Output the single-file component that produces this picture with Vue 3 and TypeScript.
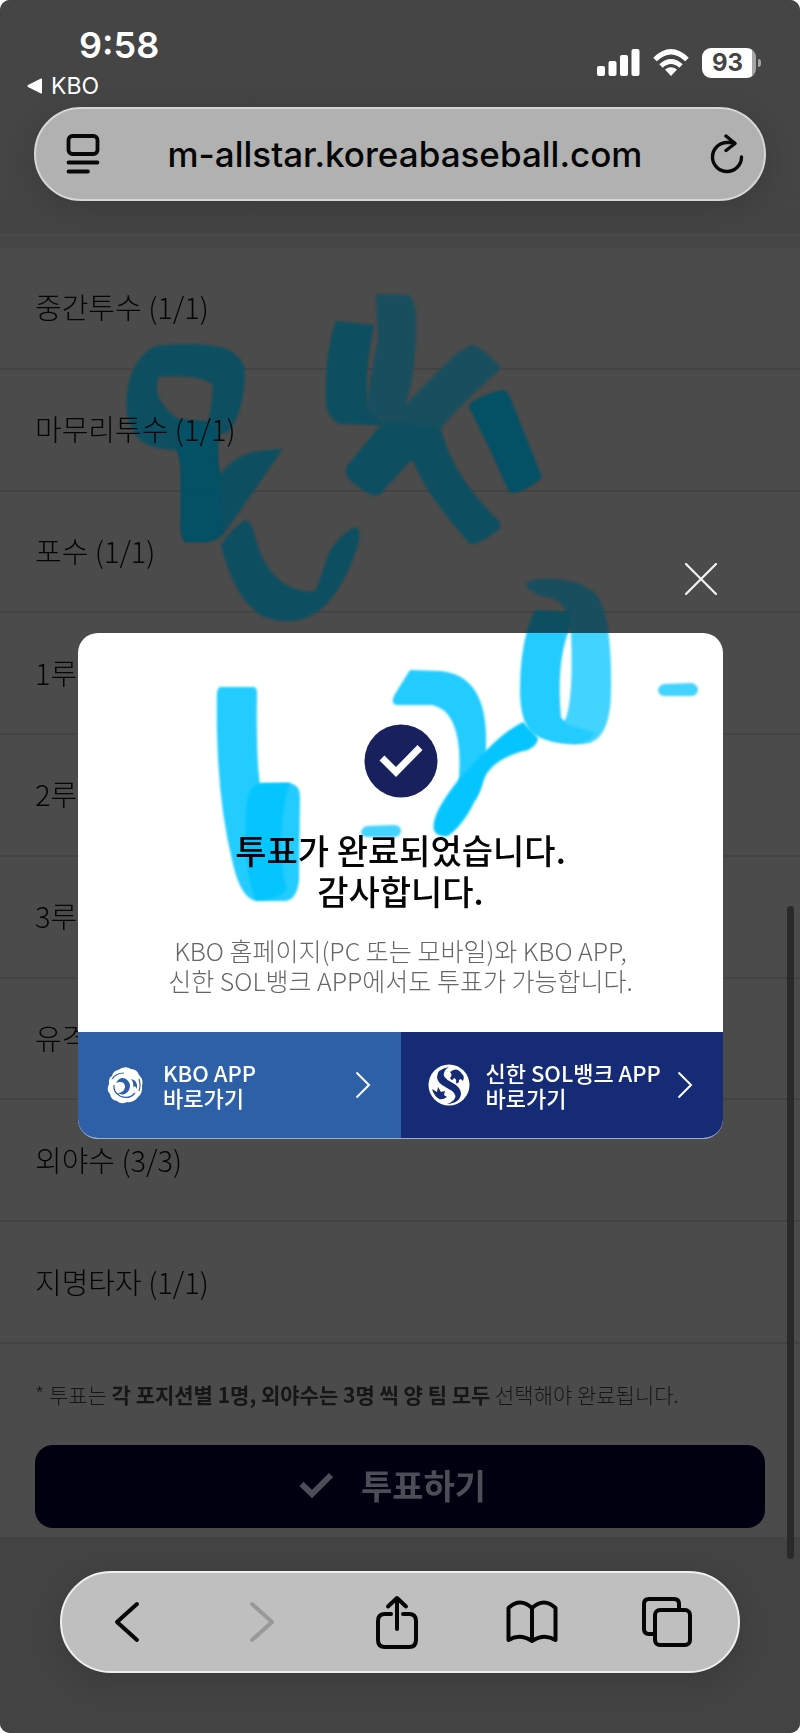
<script setup lang="ts">
interface Position {
  name: string
  picked: number
  total: number
}

const positions: Position[] = [
  { name: '중간투수', picked: 1, total: 1 },
  { name: '마무리투수', picked: 1, total: 1 },
  { name: '포수', picked: 1, total: 1 },
  { name: '1루수', picked: 1, total: 1 },
  { name: '2루수', picked: 1, total: 1 },
  { name: '3루수', picked: 1, total: 1 },
  { name: '유격수', picked: 1, total: 1 },
  { name: '외야수', picked: 3, total: 3 },
  { name: '지명타자', picked: 1, total: 1 },
]

/* Marker strokes; "tone" is the density of the ink. */
const strokes: { d: string; tone: 'thin' | 'mid' | 'full' }[] = [
  { tone: 'mid', d: 'M155 346Q195 341 225 348Q246 358 245 375Q243 415 228 432L219 435Q216 460 220 475C235 455 250 450 283 449L275 460Q255 490 225 532Q220 541 200 542L186 542Q180 538 181 520L181 470Q180 455 177 450Q150 450 138 438Q124 420 127 395Q130 360 155 346ZM158 377Q200 374 213 385Q212 405 208 422L178 419Q155 402 157 385Z' },
  { tone: 'full', d: 'M177 420L208 422L218 436Q216 460 220 475L222 532Q217 542 200 542L186 542Q180 538 181 520L181 470Q180 455 177 450Z' },
  { tone: 'mid', d: 'M245 520Q252 521 256 540Q270 590 312 592L316 590L330 550Q345 530 356 527Q362 532 358 545Q340 600 312 615Q290 627 262 616Q235 600 221 545Q230 530 245 520Z' },
  { tone: 'mid', d: 'M336 321L374 325Q365 370 367 395L368 410L384 425L340 424Q326 418 326 400Q325 350 336 321Z' },
  { tone: 'thin', d: 'M376 294L408 295Q416 300 416 320Q416 380 404 408L386 425L367 408Q368 385 378 340Z' },
  { tone: 'thin', d: 'M472 345Q480 346 500 366Q500 372 495 374Q460 405 442 427L420 450L386 424L405 405L458 352Z' },
  { tone: 'mid', d: 'M383 422L367 408L366 422L383 426L386 422L442 427L380 494Q372 500 350 480Q343 473 347 466Z' },
  { tone: 'mid', d: 'M441 430Q455 480 500 522L500 528Q480 545 470 544Q440 510 425 485L410 456L420 440Z' },
  { tone: 'full', d: 'M502 390Q508 390 512 402L542 477Q528 492 510 493Q503 480 495 460L468 405Q480 395 502 390Z' },
  { tone: 'thin', d: 'M527 588Q524 580 540 579Q585 577 600 600Q612 625 611 690Q611 735 590 743Q560 747 535 732L561 718Q565 728 569 705Q573 680 571 633L566 612Q562 598 540 596Z' },
  { tone: 'mid', d: 'M535 610L570 612L570 628Q556 660 561 718L566 724L596 733Q588 744 575 744Q550 744 535 735Q520 725 520 690Q520 640 535 610Z' },
  { tone: 'mid', d: 'M410 670L440 671Q488 675 486 745Q487 785 475 800L458 790Q466 712 432 705L396 705Q390 703 395 694Z' },
  { tone: 'full', d: 'M523 722C500 733 480 757 460 778Q430 815 434 830Q436 837 448 836Q470 820 483 780C490 765 505 755 528 750Q538 745 538 738Z' },
  { tone: 'mid', d: 'M219 687L254 687Q257 688 257 692Q256 760 260 784L290 783Q300 785 300 797L299 880Q297 900 285 901L256 901Q240 898 232 860Q215 790 217 692Z' },
  { tone: 'full', d: 'M246 815Q246 784 262 783L290 783Q281 810 281 850Q283 880 287 890Q275 901 256 900Q243 870 246 815Z' },
  { tone: 'thin', d: 'M367 826L395 825Q401 826 401 831Q400 837 394 837L366 837Q361 836 361 832Q362 827 367 826Z' },
  { tone: 'thin', d: 'M664 684L692 683Q698 685 698 690Q697 696 691 696L664 696Q658 695 658 690Q659 685 664 684Z' },
]
</script>

<template>
  <div class="screen">
    <header class="top">
      <div class="status">
        <div class="clock">
          <time>9:58</time>
          <a href="#" class="back">
            <svg width="16" height="16" viewBox="0 0 16 16" aria-hidden="true"><path d="M15 1.5v13q0 1.500-1.500.8L1 9Q-.2 8 1 7L13.500.7Q15 0 15 1.500Z" fill="#fff" /></svg>
            KBO
          </a>
        </div>
        <div class="indicators">
          <svg width="43" height="28" viewBox="0 0 43 28" fill="#fff" aria-label="signal">
            <rect x="0" y="17" width="8" height="10" rx="2" />
            <rect x="11.500" y="12" width="8" height="15" rx="2" />
            <rect x="23" y="6" width="8" height="21" rx="2" />
            <rect x="34.500" y="0" width="8" height="27" rx="2" />
          </svg>
          <svg width="36" height="28" viewBox="0 0 36 28" fill="none" stroke="#fff" stroke-width="5" aria-label="wifi">
            <path d="M2 10.500Q18-5 34 10.500" />
            <path d="M8 17Q18 8 28 17" />
            <path d="M12 20.500Q18 16 24 20.500L18 27Z" fill="#fff" stroke="none" />
          </svg>
          <div class="battery"><span>93</span></div>
        </div>
      </div>
      <div class="address">
        <button type="button" aria-label="페이지 메뉴">
          <svg width="34" height="40" viewBox="0 0 34 40" fill="none" stroke="#080808" stroke-width="3.800" stroke-linecap="round">
            <rect x="2.500" y="2" width="29" height="18" rx="4" />
            <path d="M2.500 28.500h29M2.500 37.500H22" />
          </svg>
        </button>
        <a href="#" class="url">m-allstar.koreabaseball.com</a>
        <button type="button" aria-label="새로고침">
          <svg width="34" height="40" viewBox="0 0 34 40" fill="none" stroke="#080808" stroke-width="3.400" stroke-linecap="round" stroke-linejoin="round">
            <path d="M31.500 23A14.500 14.500 0 1 1 17 8.500H24" />
            <path d="M16 2L25 9.500L16 16.500" />
          </svg>
        </button>
      </div>
    </header>

    <main>
      <ul class="positions">
        <li v-for="p in positions" :key="p.name"><span>{{ p.name }} ({{ p.picked }}/{{ p.total }})</span></li>
      </ul>
      <section class="submit">
        <p>* 투표는 <b>각 포지션별 1명, 외야수는 3명 씩 양 팀 모두</b> 선택해야 완료됩니다.</p>
        <button type="button" class="vote">
          <svg width="34" height="26" viewBox="0 0 34 26" fill="none" stroke="#4d4d57" stroke-width="6" aria-hidden="true"><path d="M2.500 12L13 22L32 3" /></svg>
          투표하기
        </button>
      </section>
    </main>

    <div class="toolbar-area">
      <nav class="toolbar">
        <button type="button" aria-label="뒤로">
          <svg width="26" height="42" viewBox="0 0 26 42"><path d="M23 3L3 21L23 39" /></svg>
        </button>
        <button type="button" aria-label="앞으로" disabled>
          <svg width="26" height="42" viewBox="0 0 26 42"><path d="M3 3L23 21L3 39" /></svg>
        </button>
        <button type="button" aria-label="공유">
          <svg width="42" height="54" viewBox="0 0 42 54"><path d="M15 19H9Q2 19 2 26V45Q2 52 9 52H33Q40 52 40 45V26Q40 19 33 19H27M21 34V3M12 11.500L21 3L30 11.500" /></svg>
        </button>
        <button type="button" aria-label="책갈피">
          <svg width="52" height="46" viewBox="0 0 52 46"><path d="M26 9Q14-2 2.500 9V41Q14 34 26 42Q38 34 49.500 41V9Q38-2 26 9V42" /></svg>
        </button>
        <button type="button" aria-label="탭">
          <svg width="50" height="50" viewBox="0 0 50 50"><path d="M37 12V7Q37 2 32 2H7Q2 2 2 7V32Q2 37 7 37H12" /><rect x="13" y="13" width="35" height="35" rx="5" /></svg>
        </button>
      </nav>
    </div>
    <div class="scroll-thumb"></div>

    <div class="overlay">
      <div class="popup">
        <button type="button" class="close" aria-label="닫기">
          <svg width="32" height="32" viewBox="0 0 32 32" stroke="#f4f4f4" stroke-width="2.200" stroke-linecap="round"><path d="M1 1L31 31M31 1L1 31" /></svg>
        </button>
        <section class="dialog" role="dialog" aria-labelledby="done-title">
          <div class="message">
            <svg class="done" width="74" height="74" viewBox="0 0 74 74" aria-hidden="true">
              <circle cx="37" cy="37" r="36.500" fill="#18205e" />
              <path d="M18 34L32 48L56 23.500" fill="none" stroke="#fff" stroke-width="7" />
            </svg>
            <h1 id="done-title">투표가 완료되었습니다.<br>감사합니다.</h1>
            <p>KBO 홈페이지(PC 또는 모바일)와 KBO APP,<br>신한 SOL뱅크 APP에서도 투표가 가능합니다.</p>
          </div>
          <div class="links">
            <a href="#" class="kbo">
              <svg class="logo" width="42" height="42" viewBox="0 0 42 42" aria-hidden="true">
                <path d="M13 6Q20 1 26 5Q32 5 34 11Q39 16 37 22Q38 29 33 33Q29 39 22 38Q16 41 12 37Q6 36 5 30Q1 26 4 20Q3 14 7 12Q8 7 13 6Z" fill="#fff" />
                <path d="M11 19Q15 12 21 15Q27 19 24 26Q20 33 12 29Q19 29 20 23Q20 18 15 18Q13 18 11 19ZM26 15Q33 16 32 25Q30 21 28 23Q29 18 26 15Z" fill="#2e60a8" />
                <path d="M9 21Q8 28 15 32Q24 36 30 29M7 15Q11 9 19 9M34 15Q36 22 34 27" fill="none" stroke="#2e60a8" stroke-width="1.200" />
              </svg>
              <span class="label">KBO APP<br>바로가기</span>
              <svg class="chevron" width="16" height="28" viewBox="0 0 16 28" aria-hidden="true"><path d="M1.500 1.500L14 14L1.500 26.500" /></svg>
            </a>
            <a href="#" class="sol">
              <svg class="logo" width="42" height="42" viewBox="0 0 42 42" aria-hidden="true">
                <circle cx="21" cy="21" r="20.500" fill="#fff" />
                <path d="M21 3Q9 5 9 13Q9 19 19 24Q29 29 27 34Q25 38 19 40Q32 39 33 30Q33 23 23 18Q14 13 16 9Q17 5 21 3Z" fill="#162b75" />
                <path d="M22 8Q29 2 34 10Q37 12 35 17Q33 14 31 16Q31 20 28 19Q29 15 26 14Q24 18 22 14Q25 11 22 8ZM4 25L9 28L10 23L13 28L17 27L16 31L19 33Q15 36 11 35Q6 32 4 25Z" fill="#162b75" />
              </svg>
              <span class="label">신한 SOL뱅크 APP<br>바로가기</span>
              <svg class="chevron" width="16" height="28" viewBox="0 0 16 28" aria-hidden="true"><path d="M1.500 1.500L14 14L1.500 26.500" /></svg>
            </a>
          </div>
        </section>
      </div>
    </div>

    <svg class="ink dim" width="800" height="1733" viewBox="0 0 800 1733" aria-hidden="true">
      <defs>
        <clipPath id="outside"><path d="M0 0H800V633H0Z" /></clipPath>
      </defs>
      <g clip-path="url(#outside)"><path v-for="s in strokes" :key="s.d" :d="s.d" :class="s.tone" fill-rule="evenodd" /></g>
    </svg>
    <svg class="ink bright" width="800" height="1733" viewBox="0 0 800 1733" aria-hidden="true">
      <defs>
        <clipPath id="inside"><path d="M78 633H723V1032H78Z" /></clipPath>
      </defs>
      <g clip-path="url(#inside)"><path v-for="s in strokes" :key="s.d" :d="s.d" :class="s.tone" fill-rule="evenodd" /></g>
    </svg>
  </div>
</template>

<style>
body {
  background: #fff;
}
</style>

<style scoped>
.screen {
  position: relative;
  isolation: isolate;
  display: flex;
  flex-direction: column;
  overflow: hidden;
  border-radius: 10px;
  background: #4b4b4b;
  color: #050505;
  font-family: "Noto Sans CJK KR", sans-serif;
}
* {
  box-sizing: border-box;
}
svg {
  display: block;
  flex: none;
}
button {
  padding: 0;
  border: 0;
  background: none;
  font: inherit;
  color: inherit;
}
a {
  color: inherit;
  text-decoration: none;
}
.top {
  display: flex;
  flex-direction: column;
  padding: 24px 34px 47px;
  background: linear-gradient(#454545, #444 94%, #484848 94%, #484848 95%, #464646 95%);
  font-family: Inter, sans-serif;
}
.status {
  display: flex;
  justify-content: space-between;
  height: 83px;
  margin: 0 4px 0 -7px;
  color: #fff;
}
.clock {
  display: flex;
  flex-direction: column;
}
time {
  padding-left: 52px;
  font-size: 36px;
  font-weight: 600;
  line-height: 42px;
}
.back {
  display: flex;
  align-items: center;
  gap: 8px;
  font-size: 23px;
  line-height: 40px;
  font-weight: 400;
}
.indicators {
  display: flex;
  align-items: center;
  gap: 13px;
  height: 78px;
}
.battery {
  position: relative;
  width: 54px;
  height: 30px;
  border-radius: 9px;
  margin-right: 6px;
  background: linear-gradient(90deg, #fff 50px, #a5a5a5 50px);
  color: #444;
  font-size: 24px;
  font-weight: 700;
  line-height: 30px;
  text-align: center;
}
.battery::after {
  content: "";
  position: absolute;
  top: 11px;
  right: -5px;
  width: 3px;
  height: 8px;
  border-radius: 0 3px 3px 0;
  background: #a5a5a5;
}
.battery span {
  padding-right: 3px;
}
.address {
  display: flex;
  align-items: center;
  justify-content: space-between;
  height: 94px;
  padding: 0 20px 0 30px;
  border: 2px solid #d6d6d6;
  border-radius: 47px;
  background: #b1b1b1;
  box-shadow: 0 8px 30px #0002;
}
.url {
  font-size: 35px;
  font-weight: 500;
  line-height: 44px;
}
.positions {
  display: grid;
  grid-auto-rows: 1fr;
  min-height: 1096px;
  margin: 0;
  padding: 0;
  list-style: none;
}
.positions li {
  display: flex;
  align-items: center;
  padding: 0 35px 3px;
  border-bottom: 2px solid #434343;
  font-size: 29px;
  font-weight: 300;
}
.positions span {
  position: relative;
  z-index: 1;
}
.submit {
  padding: 34px 35px 9px;
}
.submit p {
  margin: 0;
  color: #161616;
  font-size: 21px;
  font-weight: 300;
  line-height: 32px;
  white-space: nowrap;
}
.submit b {
  font-weight: 700;
}
.vote {
  display: flex;
  align-items: center;
  justify-content: center;
  gap: 28px;
  width: 100%;
  height: 83px;
  margin-top: 35px;
  padding: 0 15px 4px 0;
  border-radius: 18px;
  background: #000010;
  color: #4d4d57;
  font-size: 34px;
  font-weight: 700;
}
.toolbar-area {
  padding: 34px 60px 60px;
  background: #434343;
}
.toolbar {
  display: grid;
  grid-template-columns: repeat(5, 135px);
  justify-content: center;
  align-items: center;
  height: 102px;
  padding-right: 7px;
  border: 2px solid #efefef;
  border-radius: 51px;
  background: #bfbfbf;
  box-shadow: 0 8px 30px #0002;
}
.toolbar button {
  display: flex;
  justify-content: center;
}
.toolbar svg {
  fill: none;
  stroke: #050505;
  stroke-width: 4;
  stroke-linecap: round;
  stroke-linejoin: round;
}
.toolbar button:disabled svg {
  stroke: #999;
}
.scroll-thumb {
  position: absolute;
  top: 906px;
  right: 6px;
  width: 7px;
  height: 653px;
  border-radius: 4px;
  background: #292929;
}
.overlay {
  position: absolute;
  z-index: 2;
  inset: 0;
  display: flex;
  flex-direction: column;
  align-items: center;
  padding: 563px 77px 0 78px;
}
.popup {
  display: flex;
  flex-direction: column;
  width: 100%;
  max-width: 645px;
}
.close {
  align-self: flex-end;
  margin: 0 6px 38px 0;
}
.dialog {
  overflow: hidden;
  border-radius: 20px;
  border-bottom: 1px solid #9cb0d4;
  background: #fff;
}
.message {
  display: flex;
  flex-direction: column;
  align-items: center;
  padding: 91px 20px 37px;
  text-align: center;
}
h1 {
  margin: 31px 0 24px;
  color: #050505;
  font-size: 34px;
  font-weight: 500;
  line-height: 41px;
}
.message p {
  margin: 0;
  color: #666;
  font-size: 25px;
  font-weight: 300;
  line-height: 30px;
  white-space: nowrap;
}
.links {
  display: grid;
  grid-template-columns: 1fr 1fr;
}
.links a {
  display: flex;
  align-items: center;
  height: 106px;
  padding: 0 30px 0 27px;
  color: #fff;
  font-size: 22px;
  font-weight: 500;
  line-height: 25px;
  white-space: nowrap;
}
.kbo {
  background: #2e60a8;
}
.sol {
  background: #162b75;
}
.label {
  flex: 1;
  padding-left: 16px;
}
.chevron {
  fill: none;
  stroke: #fff;
  stroke-width: 2;
}
.ink {
  position: absolute;
  top: 0;
  left: 50%;
  margin-left: -400px;
  pointer-events: none;
}
.ink path {
  filter: blur(1px);
}
.ink clipPath path {
  filter: none;
}
.dim {
  opacity: 0.95;
}
.dim .thin {
  fill: #174f5f;
}
.dim .mid {
  fill: #0a5062;
}
.dim .full {
  fill: #005166;
}
.bright {
  z-index: 3;
  mix-blend-mode: multiply;
}
.bright .thin {
  fill: #42d3ff;
}
.bright .mid {
  fill: #22ccff;
}
.bright .full {
  fill: #05c5ff;
}
</style>
